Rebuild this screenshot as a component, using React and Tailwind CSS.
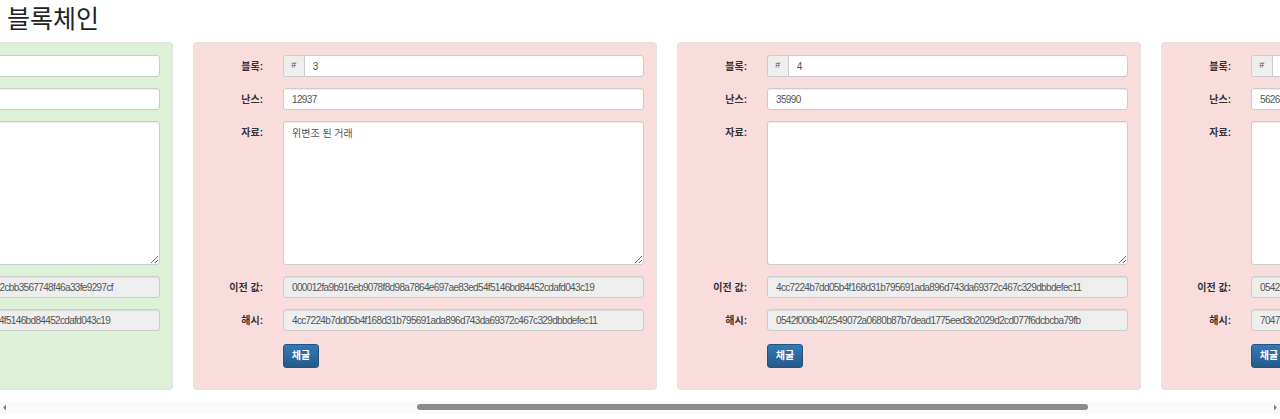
import { useLayoutEffect, useRef } from "react";

const blocks = [
  {
    n: 1,
    nonce: "11316",
    data: "",
    prev: "0000000000000000000000000000000000000000000000000000000000000000",
    hash: "000015783b764259d382017d91a36d206d0600e2cbb3567748f46a33fe9297cf",
    ok: true,
  },
  {
    n: 2,
    nonce: "35230",
    data: "",
    prev: "000015783b764259d382017d91a36d206d0600e2cbb3567748f46a33fe9297cf",
    hash: "000012fa9b916eb9078f8d98a7864e697ae83ed54f5146bd84452cdafd043c19",
    ok: true,
  },
  {
    n: 3,
    nonce: "12937",
    data: "위변조 된 거래",
    prev: "000012fa9b916eb9078f8d98a7864e697ae83ed54f5146bd84452cdafd043c19",
    hash: "4cc7224b7dd05b4f168d31b795691ada896d743da69372c467c329dbbdefec11",
    ok: false,
  },
  {
    n: 4,
    nonce: "35990",
    data: "",
    prev: "4cc7224b7dd05b4f168d31b795691ada896d743da69372c467c329dbbdefec11",
    hash: "0542f006b402549072a0680b87b7dead1775eed3b2029d2cd077f6dcbcba79fb",
    ok: false,
  },
  {
    n: 5,
    nonce: "56265",
    data: "",
    prev: "0542f006b402549072a0680b87b7dead1775eed3b2029d2cd077f6dcbcba79fb",
    hash: "7047c8a1e5b3d96f02a4c1e8f7b56d3290ae4f1c6b82d5e97a30f4c1b6d82e95",
    ok: false,
  },
];

const input =
  "h-[22px] w-full rounded-[3px] border border-[#ccc] px-[8px] text-[10px] tracking-[-0.65px] text-[#555] shadow-[inset_0_1px_1px_rgba(0,0,0,0.075)] outline-none";

function Label({ children }) {
  return (
    <div className="flex h-[22px] items-center justify-end whitespace-nowrap text-[10px] font-bold text-[#333]">
      {children}
    </div>
  );
}

function Block({ b }) {
  return (
    <div
      className={`w-[464px] shrink-0 rounded-[4px] border border-[#e3e3e3] pt-[12px] pb-[21px] pr-[12px] pl-[12px] ${
        b.ok ? "bg-[#dff0d8]" : "bg-[#f9dcdc]"
      }`}
    >
      <div className="grid grid-cols-[57px_1fr] gap-x-[20px] gap-y-[11px]">
        <Label>블록:</Label>
        <div className="flex h-[22px] overflow-hidden rounded-[3px] border border-[#ccc] bg-white">
          <span className="flex w-[22px] items-center justify-center border-r border-[#ccc] bg-[#eee] text-[9px] text-[#555]">
            #
          </span>
          <input className="h-full w-full px-[8px] text-[10px] text-[#555] outline-none" defaultValue={b.n} />
        </div>

        <Label>난스:</Label>
        <input className={`${input} bg-white`} defaultValue={b.nonce} />

        <Label>자료:</Label>
        <textarea
          spellCheck={false}
          className="h-[144px] w-full rounded-[3px] border border-[#ccc] bg-white px-[8px] py-[4px] text-[10px] text-[#555] shadow-[inset_0_1px_1px_rgba(0,0,0,0.075)] outline-none"
          defaultValue={b.data}
        />

        <Label>이전 값:</Label>
        <input readOnly className={`${input} bg-[#eee]`} value={b.prev} />

        <Label>해시:</Label>
        <input readOnly className={`${input} bg-[#eee]`} value={b.hash} />

        <div />
        <div>
          <button className="h-[24px] w-[36px] rounded-[3px] border border-[#245580] bg-gradient-to-b from-[#337ab7] to-[#265a88] text-[10px] font-bold text-white">
            채굴
          </button>
        </div>
      </div>
    </div>
  );
}

function Scrollbar() {
  return (
    <div className="flex h-[13px] items-center bg-[#fafafa]">
      <svg width="10" height="13" viewBox="0 0 10 13" className="shrink-0">
        <path d="M3 6.5 L6 3.5 L6 9.5 Z" fill="#888" />
      </svg>
      <div className="ml-[407px] h-[6px] w-[671px] rounded-full bg-[#8a8a8a]" />
      <div className="flex-1" />
      <svg width="10" height="13" viewBox="0 0 10 13" className="shrink-0">
        <path d="M7 6.5 L4 3.5 L4 9.5 Z" fill="#888" />
      </svg>
    </div>
  );
}

export default function App() {
  const ref = useRef(null);
  useLayoutEffect(() => {
    if (ref.current) ref.current.scrollLeft = 775;
  }, []);

  return (
    <div className="h-[419px] w-[1280px] overflow-hidden bg-white font-['Liberation_Sans','Noto_Sans_CJK_KR',sans-serif]">
      <h1 className="flex h-[42px] items-center pl-[7px] pb-[3px] text-[25px] font-normal text-[#222]">
        블록체인
      </h1>
      <div ref={ref} className="overflow-x-scroll pb-[11px] [scrollbar-width:none]">
        <div className="flex w-max gap-[20px]">
          {blocks.map((b) => (
            <Block key={b.n} b={b} />
          ))}
        </div>
      </div>
      <Scrollbar />
    </div>
  );
}
